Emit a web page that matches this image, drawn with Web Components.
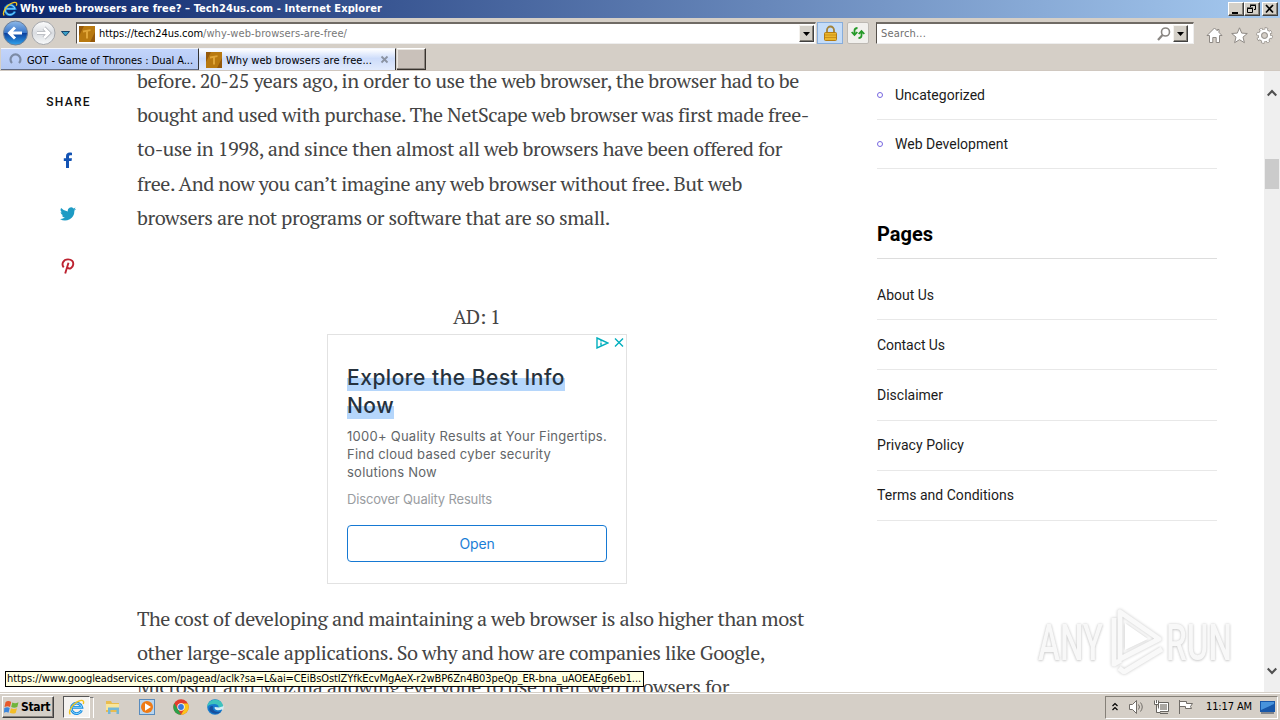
<!DOCTYPE html>
<html lang="en">
<head>
<meta charset="utf-8">
<title>Why web browsers are free? – Tech24us.com</title>
<style>
html,body{margin:0;padding:0;width:1280px;height:720px;overflow:hidden;background:#fff}
</style>
</head>
<body>
<browser-desktop></browser-desktop>
<script>
const define = (name, html) => customElements.define(name, class extends HTMLElement {
  constructor() {
    super();
    const t = document.createElement('template');
    t.innerHTML = html;
    this.attachShadow({ mode: 'open' }).append(t.content.cloneNode(true));
  }
});

/* One line of text, spaced (or scaled with the "scale" attribute) to a given width. */
customElements.define('fit-text', class extends HTMLElement {
  constructor() {
    super();
    this.attachShadow({ mode: 'open' }).innerHTML =
      '<style>:host{display:block;white-space:nowrap}span{display:inline-block;transform-origin:0 50%}</style><span><slot></slot></span>';
  }
  connectedCallback() { this.fit(); }
  fit() {
    const want = parseFloat(this.getAttribute('w'));
    const s = this.shadowRoot.querySelector('span');
    s.style.letterSpacing = s.style.transform = '';
    const have = s.offsetWidth && s.getBoundingClientRect().width;
    if (!want || !have) return;
    this.style.width = want + 'px';
    if (this.hasAttribute('scale')) s.style.transform = `scaleX(${want / have})`;
    else s.style.letterSpacing = (want - have) / this.textContent.length + 'px';
  }
});

define('ie-logo', `<style>:host{display:block;width:16px;height:16px;flex:none}svg{display:block;width:100%;height:100%}</style>
<svg viewBox="0 0 16 16"><path d="M12.8 10.6A5 4.9 0 1 1 13 7.8H4.2" fill="none" stroke="#1b8be0" stroke-width="2.6"/><path d="M12.8 10.6A5 4.9 0 1 1 13 7.8H4.2" fill="none" stroke="#8fdcff" stroke-width=".9"/><path d="M2.2 14.5C-.5 11.5 5 3.4 11.3 1.6c3.2-.9 4 .8 3 3.2" fill="none" stroke="#f2c41d" stroke-width="1.3"/></svg>`);

define('site-icon', `<style>:host{display:block;width:16px;height:16px;flex:none}svg{display:block}</style>
<svg width="16" height="16"><rect width="16" height="16" fill="#b87910"/><path d="M0 0h5L0 10zM11 16h5V6z" fill="#95590a"/><path d="M4 4.600L11.500 3.300v1.800L9 5.600V12.500H7V6L4 6.500z" fill="#e0a538"/></svg>`);

define('win-button', `<style>:host{display:flex;box-sizing:border-box;width:16px;height:14px;background:#d4d0c8;border:1px solid;border-color:#fff #404040 #404040 #fff;box-shadow:inset -1px -1px #848078;align-items:center;justify-content:center}</style><slot></slot>`);

define('title-bar', `<style>
:host{display:flex;height:18px;box-sizing:border-box;padding:0 2px 0 2px;align-items:center;background:linear-gradient(90deg,#0a246a,#a6caf0);color:#fff;font:bold 11px/18px Tahoma,"DejaVu Sans Condensed","DejaVu Sans",sans-serif}
fit-text{margin-left:2px}.b{margin-left:auto;display:flex}.c{margin-left:2px}svg{display:block}
</style><ie-logo></ie-logo><fit-text w="362">Why web browsers are free? – Tech24us.com - Internet Explorer</fit-text>
<div class="b"><win-button><svg width="12" height="10"><path d="M2 8h6v2H2z"/></svg></win-button><win-button><svg width="12" height="10" fill="none" stroke="#000"><path d="M4.500 3V1.500h5v4H8M4 1h6"/><path d="M1.500 4.500h5v4h-5zM1 4h6"/></svg></win-button><win-button class="c"><svg width="12" height="10"><path d="M2 1l7 7.500M9 1L2 8.500" stroke="#000" stroke-width="1.700"/></svg></win-button></div>`);

define('drop-button', `<style>:host{display:flex;box-sizing:border-box;width:15px;height:17px;background:#d4d0c8;border:1px solid;border-color:#f4f2ee #404040 #404040 #f4f2ee;box-shadow:inset -1px -1px #848078;align-items:center;justify-content:center}</style><svg width="7" height="4"><path d="M0 0h7L3.500 4z"/></svg>`);

define('nav-bar', `<style>
:host{display:flex;height:30px;box-sizing:border-box;background:#d5cfc7;align-items:flex-start;padding:4px 7px 0 2px;font:11px/18px Tahoma,"DejaVu Sans Condensed","DejaVu Sans",sans-serif;color:#000}
svg{display:block}.nav{margin-top:-4px}
.field{display:flex;box-sizing:border-box;height:22px;background:#fff;border:1px solid;border-color:#706b65 #eee #eee #55504b;border-top-width:2px;align-items:center;padding:0 1px}
.addr{width:740px;margin-left:2px}.addr site-icon{margin:0 4px 0 1px}.p{color:#777}.addr drop-button{margin-left:auto}
.lock{display:flex;width:24px;height:20px;background:#c4dcf8;border:1px solid #87addb;align-items:center;justify-content:center;margin-left:1px;margin-top:0}
.ref{display:flex;width:20px;height:20px;background:#f1f0ed;border:1px solid #bdb9b3;border-radius:2px;align-items:center;justify-content:center;margin-left:4px}
.search{width:318px;margin-left:7px;color:#6f6f6f;padding-left:4px}.search .m{margin-left:auto;margin-right:2px}.search drop-button{margin-right:4px}
.tools{display:flex;gap:8px;margin-left:auto;margin-top:5px}
</style>
<svg class="nav" width="72" height="30" viewBox="0 0 72 30">
<defs><linearGradient id="g" x2="0" y2="1"><stop offset="0" stop-color="#8fb9e8"/><stop offset=".48" stop-color="#3b78cb"/><stop offset=".5" stop-color="#0b3e9c"/><stop offset="1" stop-color="#31a4ee"/></linearGradient><linearGradient id="h" x2="0" y2="1"><stop offset="0" stop-color="#fdfdfd"/><stop offset=".5" stop-color="#d9dce0"/><stop offset="1" stop-color="#f8fafb"/></linearGradient></defs>
<circle cx="13.500" cy="15" r="12" fill="url(#g)" stroke="#6d7f98"/><path d="M20 15H8M13 9.500L7.500 15l5.500 5.500" fill="none" stroke="#fff" stroke-width="3"/>
<circle cx="41.500" cy="15" r="11.500" fill="url(#h)" stroke="#a4a6aa"/><path d="M35 15H46.500M42 10l5 5-5 5" fill="none" stroke="#a9adb3" stroke-width="4"/><path d="M35 15H46.500M42 10l5 5-5 5" fill="none" stroke="#fff" stroke-width="2.600"/>
<path d="M59.500 13.500h8L63.500 18z" fill="#3aa0c8" stroke="#16456b"/></svg>
<div class="field addr"><site-icon></site-icon><fit-text w="104">https://tech24us.com</fit-text><fit-text class="p" w="144">/why-web-browsers-are-free/</fit-text><drop-button></drop-button></div>
<div class="lock"><svg width="15" height="17"><path d="M4 8V5a3.500 3.500 0 0 1 7 0v3" fill="none" stroke="#a28238" stroke-width="1.800"/><rect x="1.500" y="7.500" width="12" height="8" rx="1" fill="#eab62c" stroke="#b47c12"/><path d="M2 10h11M2 12.500h11" stroke="#cc9119"/></svg></div>
<div class="ref"><svg width="14" height="14" fill="none" stroke="#269a2a" stroke-width="1.800"><path d="M3.500 9V4.500Q3.500 2 6.500 2M.7 6l2.800 3 2.800-3M10.500 5v4.500q0 2.500-3 2.500M7.700 8l2.800-3 2.800 3"/></svg></div>
<div class="field search"><fit-text w="45">Search...</fit-text><svg class="m" width="14" height="14" fill="none" stroke="#898682"><circle cx="8.500" cy="5" r="4" stroke-width="1.600"/><path d="M5.500 8L1 13" stroke-width="2.200"/></svg><drop-button></drop-button></div>
<div class="tools"><svg width="17" height="17" fill="#fff" stroke="#8e8984"><path d="M8.500 1L1 8.500h2.500v7h3.300v-5h3.400v5h3.300v-7H16L13 5.500V2.500h-1.700v1.300z"/></svg>
<svg width="17" height="17" fill="#fff" stroke="#8e8984"><path d="M8.500.8l2.200 5.300 5.600.4-4.300 3.600 1.400 5.600-4.900-3-4.900 3L5 10.100.7 6.500l5.600-.4z"/></svg>
<svg width="17" height="17" viewBox="0 0 17 17"><circle cx="8.500" cy="8.500" r="6.600" fill="none" stroke="#8e8984" stroke-width="3.200" stroke-dasharray="3.100 2.083"/><circle cx="8.500" cy="8.500" r="4.600" fill="none" stroke="#8e8984" stroke-width="4"/><circle cx="8.500" cy="8.500" r="6.600" fill="none" stroke="#fff" stroke-width="2" stroke-dasharray="2 3.183" stroke-dashoffset="-.55"/><circle cx="8.500" cy="8.500" r="4.600" fill="none" stroke="#fff" stroke-width="2.600"/><circle cx="8.500" cy="8.500" r="2.800" fill="#d5cfc7" stroke="#8e8984" stroke-width=".7"/></svg></div>`);

define('tab-strip', `<style>
:host{display:flex;height:23px;box-sizing:border-box;background:#d5cfc7;border-bottom:1px solid #d0c8c0;font:11px/21px Tahoma,"DejaVu Sans Condensed","DejaVu Sans",sans-serif;color:#000;padding-left:1px}
.t{display:flex;box-sizing:border-box;height:22px;align-items:center;border-right:1px solid #333;border-top:1px solid #f3f6fd}
fit-text{position:relative;top:1px}
.a{width:198px;background:linear-gradient(#c2d4fa,#b3c8f3);padding-left:8px;border-bottom:1px solid #626c84}.a fit-text{margin-left:5px}
.b{width:197px;background:linear-gradient(#fff,#cddcfa 45%,#e2ebfd);padding:0 6px 0 7px}.b fit-text{margin-left:4px}.b svg{margin-left:auto}
.n{width:29px;box-sizing:border-box;height:22px;background:#c9c1ba;border:1px solid #38332e;border-left:0;border-top-color:#fff;box-shadow:inset -1px -1px #8c8680,inset 1px 1px #e9e6e1;margin-left:1px}
</style>
<div class="t a"><svg width="13" height="14"><path d="M3 11A5 5 0 1 1 10 11" fill="none" stroke="#7c8ba5" stroke-width="2.200"/></svg><fit-text w="166">GOT - Game of Thrones : Dual A...</fit-text></div>
<div class="t b"><site-icon></site-icon><fit-text w="146">Why web browsers are free...</fit-text><svg width="9" height="9"><path d="M1.500 1.500l6 6M7.500 1.500l-6 6" stroke="#8b93a2" stroke-width="1.800"/></svg></div><div class="n"></div>`);

define('share-rail', `<style>
:host{display:flex;flex-direction:column;align-items:center;width:137px;box-sizing:border-box;padding:21px 1px 0 0;font:500 12px/20px Roboto,sans-serif;color:#111}
svg{display:block}.f{margin-top:40px}.w{margin-top:38px}.p{margin-top:37px}
</style><fit-text w="44.500" style="margin-left:1px">SHARE</fit-text>
<svg class="f" width="10" height="17" viewBox="0 0 10 17"><path d="M3 16V9H.8V6.200H3V4.300C3 1.800 4.500.6 6.600.6c1 0 2 .1 2.400.2v2.500H7.500C6.300 3.300 6 3.900 6 4.800v1.400h3L8.500 9H6v7z" fill="#1353b4"/></svg>
<svg class="w" width="16" height="14" viewBox="0 0 24 20"><path d="M24 2.400a9.800 9.800 0 0 1-2.800.8A4.900 4.900 0 0 0 23.300.4a10 10 0 0 1-3.100 1.200 4.900 4.900 0 0 0-8.400 4.500A14 14 0 0 1 1.700 1a4.900 4.900 0 0 0 1.500 6.600A4.900 4.900 0 0 1 1 7c0 2.300 1.600 4.400 3.900 4.900a5 5 0 0 1-2.200.1 4.900 4.900 0 0 0 4.600 3.400A9.900 9.900 0 0 1 0 17.500a14 14 0 0 0 21.500-12.600A10 10 0 0 0 24 2.400z" fill="#1e9bc4"/></svg>
<svg class="p" width="14" height="17" viewBox="0 0 14 17"><path d="M2.700 9.400C.2 6.300 2 1.400 7 1.400c4 0 5.600 2.500 5.200 5.100-.5 3.600-3.700 5-5.500 3.100M7.500 4.800L4.200 15.500" fill="none" stroke="#bd2331" stroke-width="1.900"/></svg>`);

define('ad-card', `<style>
:host{display:block;box-sizing:border-box;width:300px;height:250px;border:1px solid #e2e2e2;margin-left:190px;padding:0 19px;font-family:"Google Sans","Product Sans",Inter,sans-serif}
.i{display:flex;justify-content:flex-end;gap:5px;height:29px;margin-right:-17px;padding-top:2px;box-sizing:border-box}
.h{font-size:21px;line-height:28px;font-weight:500;color:#26323d}.h fit-text{background:linear-gradient(transparent 10px,#b5d6fb 10px,#b5d6fb 23px,transparent 23px);background-position:0 4px;background-repeat:no-repeat}
.d{font-size:13px;line-height:18px;color:#626568;margin-top:7px}.s{font-size:13px;line-height:18px;color:#999c9f;margin-top:9px}
.o{display:flex;justify-content:center;box-sizing:border-box;height:37px;border:1px solid #1679d3;border-radius:4px;margin-top:17px;color:#1b7ed7;font-size:14px;line-height:35px}
</style><div class="i"><svg width="13" height="12" fill="none" stroke="#00aebd" stroke-width="1.400"><path d="M1 1l11 5L1 11zM5 5.500v2.800M5 3.500v1"/></svg><svg width="10" height="11" stroke="#00aebd" stroke-width="1.400"><path d="M1 1.500l8 8M9 1.500l-8 8"/></svg></div>
<div class="h"><fit-text w="218">Explore the Best Info</fit-text><fit-text w="47">Now</fit-text></div>
<div class="d"><fit-text w="260">1000+ Quality Results at Your Fingertips.</fit-text><fit-text w="204">Find cloud based cyber security</fit-text><fit-text w="90">solutions Now</fit-text></div>
<div class="s"><fit-text w="145">Discover Quality Results</fit-text></div><div class="o"><fit-text w="35">Open</fit-text></div>`);

define('article-body', `<style>
:host{display:block;width:680px;margin-top:-7px;font:20px/34.200px "PT Serif","Liberation Serif",serif;color:#444}
p{margin:0}.ad{height:34px;margin:65px 0 0 316px}ad-card{margin-bottom:18px}
</style><p><fit-text w="662">before. 20-25 years ago, in order to use the web browser, the browser had to be</fit-text><fit-text w="671">bought and used with purchase. The NetScape web browser was first made free-</fit-text><fit-text w="645">to-use in 1998, and since then almost all web browsers have been offered for</fit-text><fit-text w="605">free. And now you can’t imagine any web browser without free. But web</fit-text><fit-text w="473">browsers are not programs or software that are so small.</fit-text></p>
<p class="ad"><fit-text w="47">AD: 1</fit-text></p><ad-card></ad-card>
<p><fit-text w="667">The cost of developing and maintaining a web browser is also higher than most</fit-text><fit-text w="628">other large-scale applications. So why and how are companies like Google,</fit-text><fit-text w="592">Microsoft and Mozilla allowing everyone to use their web browsers for</fit-text></p>`);

define('side-bar', `<style>
:host{display:block;width:340px;margin-left:60px;font:14px/20px Roboto,sans-serif;color:#1b1b1b}
.r{display:flex;align-items:center;box-sizing:border-box;height:50.200px;border-bottom:1px solid #e8e8e8}
.c{height:49px}i{box-sizing:border-box;width:6px;height:6px;border:1.500px solid #7767e0;border-radius:50%;margin-right:12px}
h2{margin:54px 0 0;height:36px;border-bottom:1px solid #ddd;font-size:20px;line-height:22px;font-weight:700;color:#000;box-sizing:border-box}
.g{padding-top:11px}
</style><div class="r c"><i></i><fit-text w="90">Uncategorized</fit-text></div><div class="r c"><i></i><fit-text w="113">Web Development</fit-text></div>
<h2><fit-text w="56">Pages</fit-text></h2><div class="g"><div class="r"><fit-text w="57">About Us</fit-text></div><div class="r"><fit-text w="68">Contact Us</fit-text></div><div class="r"><fit-text w="66">Disclaimer</fit-text></div><div class="r"><fit-text w="87">Privacy Policy</fit-text></div><div class="r"><fit-text w="137">Terms and Conditions</fit-text></div></div>`);

define('scroll-bar', `<style>:host{display:flex;flex-direction:column;width:16px;background:#efefef;margin-left:auto;align-items:center}svg{display:block}.u{margin-top:18px}.t{width:14px;height:30px;background:#cbcbcb;margin-top:62px}.d{margin-top:auto;margin-bottom:17px}</style>
<svg class="u" width="10" height="8"><path d="M.7 6.500L5 2l4.300 4.500" fill="none" stroke="#505050" stroke-width="2.200"/></svg><div class="t"></div><svg class="d" width="10" height="8"><path d="M.7 1.500L5 6l4.300-4.500" fill="none" stroke="#505050" stroke-width="2.200"/></svg>`);

define('water-mark', `<style>:host{display:flex;position:absolute;left:1038px;top:534px;height:70px;align-items:center;font:500 50px/68px Roboto,sans-serif;color:#f8f8f8;text-shadow:0 0 3px #ccc,0 1px 3px #d4d4d4}fit-text{position:relative;top:3px}svg{display:block;margin:0 1px 0 2px;filter:drop-shadow(0 0 1.500px #c4c4c4)}</style>
<fit-text scale w="65">ANY</fit-text><svg width="60" height="68" fill="none" stroke="#f9f9f9" stroke-width="5" stroke-linejoin="round"><path d="M15 6v47l39-20zM9 12v46l7-4M14 62l5 4 38-23"/><path d="M20 17v27l23-11z" stroke="none" fill="#fff"/></svg><fit-text scale w="66">RUN</fit-text>`);

define('status-tip', `<style>:host{display:block;position:absolute;left:5px;top:600px;box-sizing:border-box;width:639px;height:16px;background:#ffffe1;border:1px solid #000;padding-left:1px;font:11px/14px Tahoma,"DejaVu Sans Condensed","DejaVu Sans",sans-serif;color:#000}</style><fit-text w="634">https://www.googleadservices.com/pagead/aclk?sa=L&amp;ai=CEiBsOstIZYfkEcvMgAeX-r2wBP6Zn4B03peQp_ER-bna_uAOEAEg6eb1...</fit-text>`);

define('web-page', `<style>:host{display:flex;position:relative;height:621px;overflow:hidden;background:#fff}</style>
<share-rail></share-rail><article-body></article-body><side-bar></side-bar><scroll-bar></scroll-bar><water-mark></water-mark><status-tip></status-tip>`);

define('task-bar', `<style>
:host{display:flex;height:28px;box-sizing:border-box;background:#d5cfc7;border-top:1px solid #d5cfc7;box-shadow:inset 0 1px #fff;padding:3px 2px 2px;align-items:center;font:11px/20px Tahoma,"DejaVu Sans Condensed","DejaVu Sans",sans-serif;color:#000}
svg{display:block;flex:none}
.s{display:flex;align-items:center;box-sizing:border-box;width:52px;height:22px;border:1px solid;border-color:#fff #404040 #404040 #fff;box-shadow:inset -1px -1px #85807a;font-weight:bold;font-size:12px;padding-left:1px}.s fit-text{margin-left:1px}
.e{display:flex;align-items:center;justify-content:center;box-sizing:border-box;width:27px;height:22px;background:#f5f3f0;border:1px solid;border-color:#555 #fff #fff #555;margin-left:9px}
.x{width:3px;height:20px;border-right:1px solid #fff;border-top:1px solid #777}
.q{display:flex;gap:18px;margin-left:11px}.y{display:flex;align-items:center;margin-left:auto;box-sizing:border-box;width:173px;height:23px;border:1px solid;border-color:#858078 #fff #fff #858078;padding-left:6px}
</style>
<div class="s"><svg width="16" height="16"><path d="M1.500 3.200C4 1.500 5.500 2 7.200 3L6 8C4.500 7 2.800 7 .5 8z" fill="#e8592b"/><path d="M8.300 3.500c2 1 4 .8 6.200-.2l-1.200 4.800c-2 1-4 1-6.100 0z" fill="#70b53b"/><path d="M.3 9C2.500 8 4 8 5.700 9l-1.200 4.700c-1.600-1-3-1-4.500 0z" fill="#3b86dd"/><path d="M7 9.200c2 1 4 .8 6 0l-1.300 4.700c-2 .9-4 .8-5.900-.1z" fill="#f3bd27"/></svg><fit-text w="29">Start</fit-text></div>
<div class="e"><ie-logo style="width:17px;height:17px"></ie-logo></div><div class="x"></div>
<div class="q"><svg width="16" height="16"><path d="M1 2h5l1 2h7v9H1z" fill="#e9bc4f"/><path d="M1 5h13v6H1z" fill="#fae69a"/><path d="M3 15V8.500h11V15h-2.500v-4h-6v4z" fill="#73b7d8"/></svg>
<svg width="16" height="16"><rect x=".5" y=".5" width="15" height="15" fill="#b8d5ef" stroke="#588bbd"/><circle cx="8" cy="8" r="6" fill="#ef7b16"/><path d="M6 4.200v7.600L12 8z" fill="#fff"/></svg>
<svg width="16" height="16"><circle cx="8" cy="8" r="7.700" fill="#e33d2c"/><path d="M1.300 4.200L5 10.500l3 5.200A7.700 7.700 0 0 1 1.300 4.200z" fill="#2aa14a"/><path d="M8 4.500h6.900A7.700 7.700 0 0 1 8 15.700l3.200-5.500z" fill="#fbc51a"/><circle cx="8" cy="8" r="3.700" fill="#fff"/><circle cx="8" cy="8" r="2.900" fill="#3979db"/></svg>
<svg width="17" height="16"><circle cx="8" cy="8" r="7.800" fill="#167bce"/><path d="M.4 8C0-1 15-2 16 7c.1 3-2.300 3.600-5 3 2-3-1-5-3.500-5C4 5 1 6 .4 8z" fill="#3dc3bd"/><path d="M6 7.500c-1 3 2 6.500 8 5C10 17 1 14 2.500 9 3 7.500 4.500 6.500 6 7.500z" fill="#174f9d"/><path d="M7.800 8c-1.300 2.500 3 4.500 7 2.500l1.200.5 1-4-5 1.500z" fill="#d5eef7"/></svg></div>
<div class="y"><svg width="6" height="10" fill="none" stroke="#000" stroke-width="1.200"><path d="M.5 4L3 1.500 5.500 4M.5 8L3 5.500 5.500 8"/></svg>
<svg style="margin-left:10px" width="17" height="16" fill="none" stroke="#716d68"><path d="M1.500 5.500h3l4-4v13l-4-4h-3z" fill="#fff"/><path d="M10.500 5.500q2 2.500 0 5M12.500 3.500q3.500 4.500 0 9"/></svg>
<svg style="margin-left:8px" width="17" height="16" fill="#fff" stroke="#67645f"><path d="M5.500 3.500h10v9h-10zM7 14.500h8"/><path d="M7 5h7v6H7z" fill="#aaa7a2" stroke="none"/><path d="M1.500 1.500v4h4v-4M3.500 5.500v8h4M3.500 1v3"/></svg>
<svg style="margin-left:7px" width="17" height="16" fill="#fff" stroke="#716d68"><path d="M2.500 15V1M2.500 2.500h7v2h6l-2 3 1 2h-6v-2h-6z"/></svg>
<fit-text style="margin-left:12px" w="46">11:17 AM</fit-text><svg style="margin-left:8px" width="15" height="13"><rect width="15" height="11" fill="#1757a9"/><path d="M1 1h13v2L1 9z" fill="#4793dc"/><path d="M1 12h13" stroke="#303c50"/></svg></div>`);

define('browser-desktop', `<style>:host{display:flex;flex-direction:column;width:1280px;height:720px;overflow:hidden}</style><title-bar></title-bar><nav-bar></nav-bar><tab-strip></tab-strip><web-page></web-page><task-bar></task-bar>`);

/* Lines are measured again once the whole tree is in place. */
const refit = root => root.querySelectorAll('*').forEach(e => { if (e.fit) e.fit(); else if (e.shadowRoot) refit(e.shadowRoot); });
refit(document);
</script>
</body>
</html>
